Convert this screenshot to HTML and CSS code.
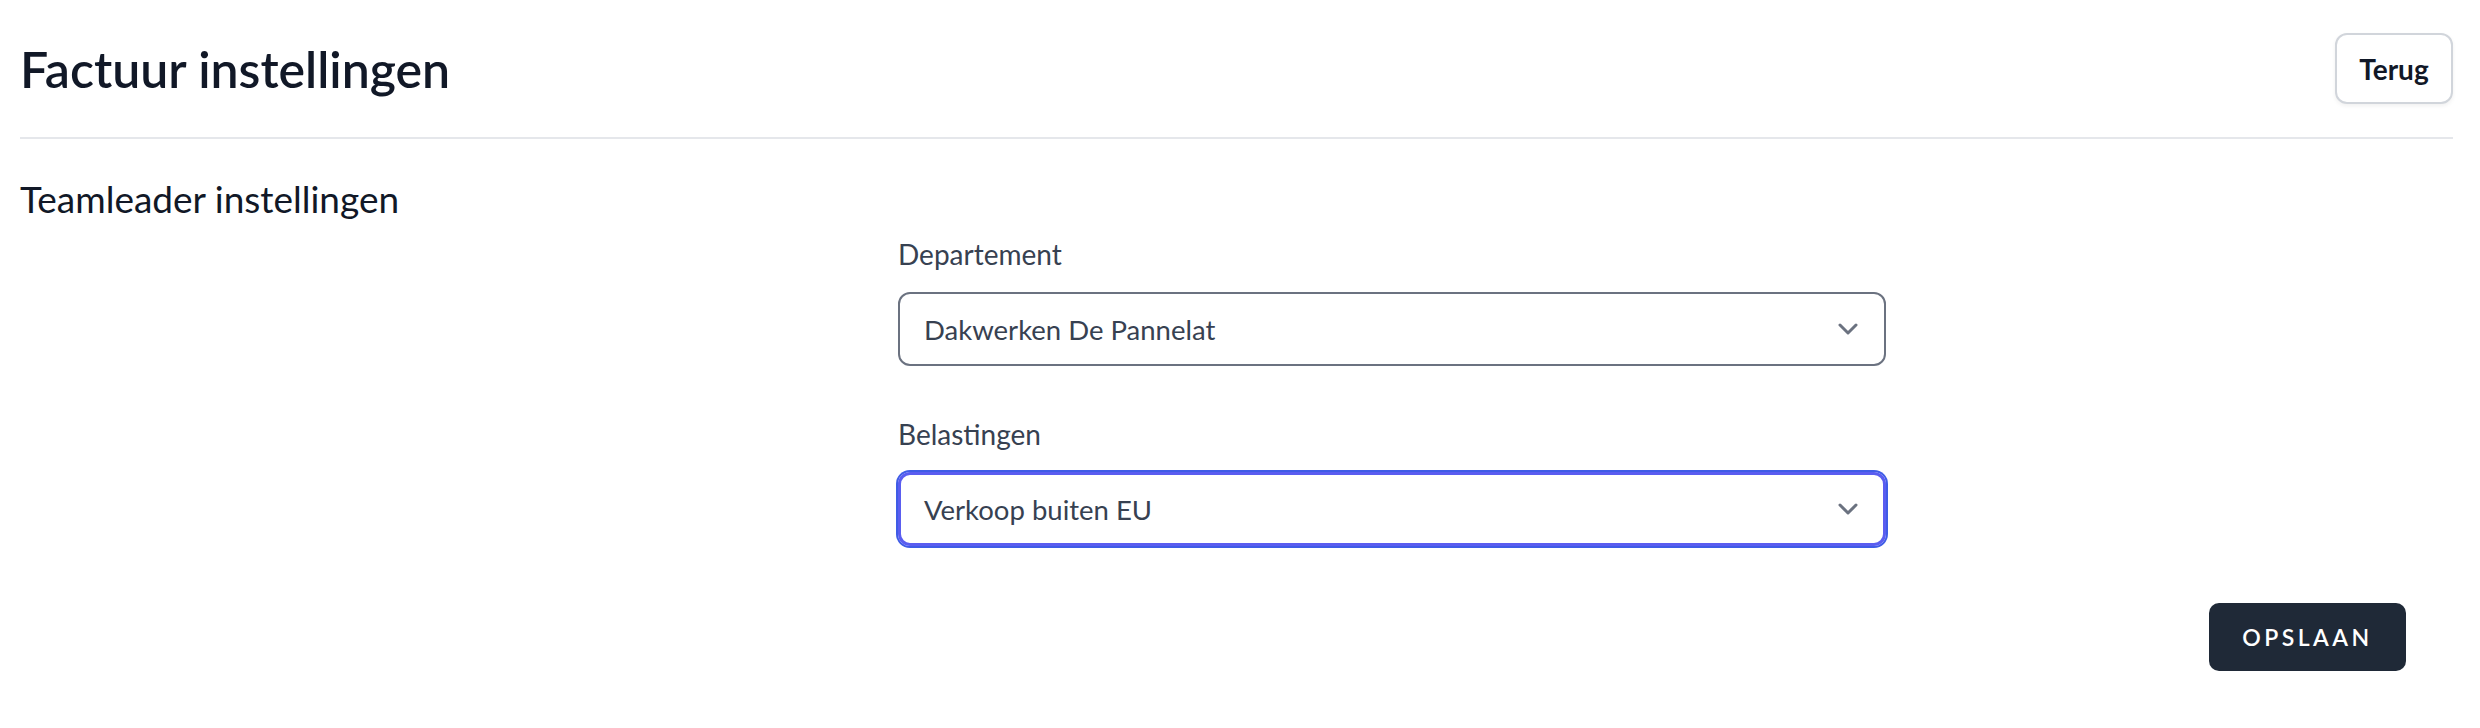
FILE: index.html
```html
<!DOCTYPE html>
<html lang="nl">
<head>
    <meta charset="UTF-8">
    <meta name="viewport" content="width=device-width, initial-scale=1.0">
    <title>Factuur instellingen</title>
    <link rel="stylesheet" href="styles.css">
</head>
<body>
    <div class="page">
        <div class="page-header">
            <h1>Factuur instellingen</h1>
            <button class="btn-back">Terug</button>
        </div>

        <h2 class="section-title">Teamleader instellingen</h2>

        <form class="settings-form">
            <div class="field">
                <label for="departement">Departement</label>
                <div class="select">
                    <span>Dakwerken De Pannelat</span>
                    <svg class="chevron" width="20" height="12" viewBox="0 0 20 12" fill="none">
                        <path d="M2 2l8 8 8-8" stroke="#6b7280" stroke-width="3" stroke-linecap="round" stroke-linejoin="round"/>
                    </svg>
                </div>
            </div>

            <div class="field">
                <label for="belastingen">Belastingen</label>
                <div class="select focused">
                    <span>Verkoop buiten EU</span>
                    <svg class="chevron" width="20" height="12" viewBox="0 0 20 12" fill="none">
                        <path d="M2 2l8 8 8-8" stroke="#6b7280" stroke-width="3" stroke-linecap="round" stroke-linejoin="round"/>
                    </svg>
                </div>
            </div>

            <div class="actions">
                <button type="button" class="btn-save">Opslaan</button>
            </div>
        </form>
    </div>
</body>
</html>
```

FILE: styles.css
```css
body {
    margin: 0;
    font-family: Lato, "Noto Sans", sans-serif;
    color: #111827;
    background: white;
}
.page {
    padding: 0 27px 0 20px;
}
.page-header {
    display: flex;
    justify-content: space-between;
    align-items: center;
    padding: 33px 0 33px 0;
    border-bottom: 2px solid #e5e7eb;
}
h1 {
    margin: 0;
    font-size: 50px;
    font-weight: 600;
    line-height: 64px;
    color: #111827;
}
.btn-back {
    height: 71px;
    width: 118px;
    background: white;
    border: 2px solid #d1d5db;
    border-radius: 12px;
    font-family: inherit;
    font-size: 28px;
    font-weight: 700;
    color: #111827;
    box-shadow: 0 2px 4px rgba(0,0,0,0.06);
}
.section-title {
    margin: 32px 0 0 0;
    font-size: 37px;
    font-weight: 400;
    line-height: 56px;
    color: #111827;
}
.settings-form {
    margin: 7px 47px 0 878px;
}
.field {
    width: 988px;
    margin-bottom: 48px;
}
.field:last-of-type {
    margin-bottom: 0;
}
label {
    display: block;
    font-size: 28px;
    line-height: 40px;
    color: #374151;
    margin-bottom: 18px;
}
.select {
    box-sizing: border-box;
    height: 74px;
    display: flex;
    align-items: center;
    justify-content: space-between;
    padding: 0 26px 0 24px;
    border: 2px solid #6b7280;
    border-radius: 12px;
    font-size: 27.5px;
    color: #374151;
}
.select.focused {
    border: 3px solid #5a5df0;
    padding: 0 25px 0 23px;
    box-shadow: 0 0 0 2px #3f5ce6;
}
.actions {
    display: flex;
    justify-content: flex-end;
    margin-top: 57px;
}
.btn-save {
    width: 197px;
    height: 68px;
    background: #1f2937;
    color: white;
    border: none;
    border-radius: 10px;
    font-family: inherit;
    font-size: 23px;
    font-weight: 600;
    letter-spacing: 0.15em;
    text-transform: uppercase;
}
```
